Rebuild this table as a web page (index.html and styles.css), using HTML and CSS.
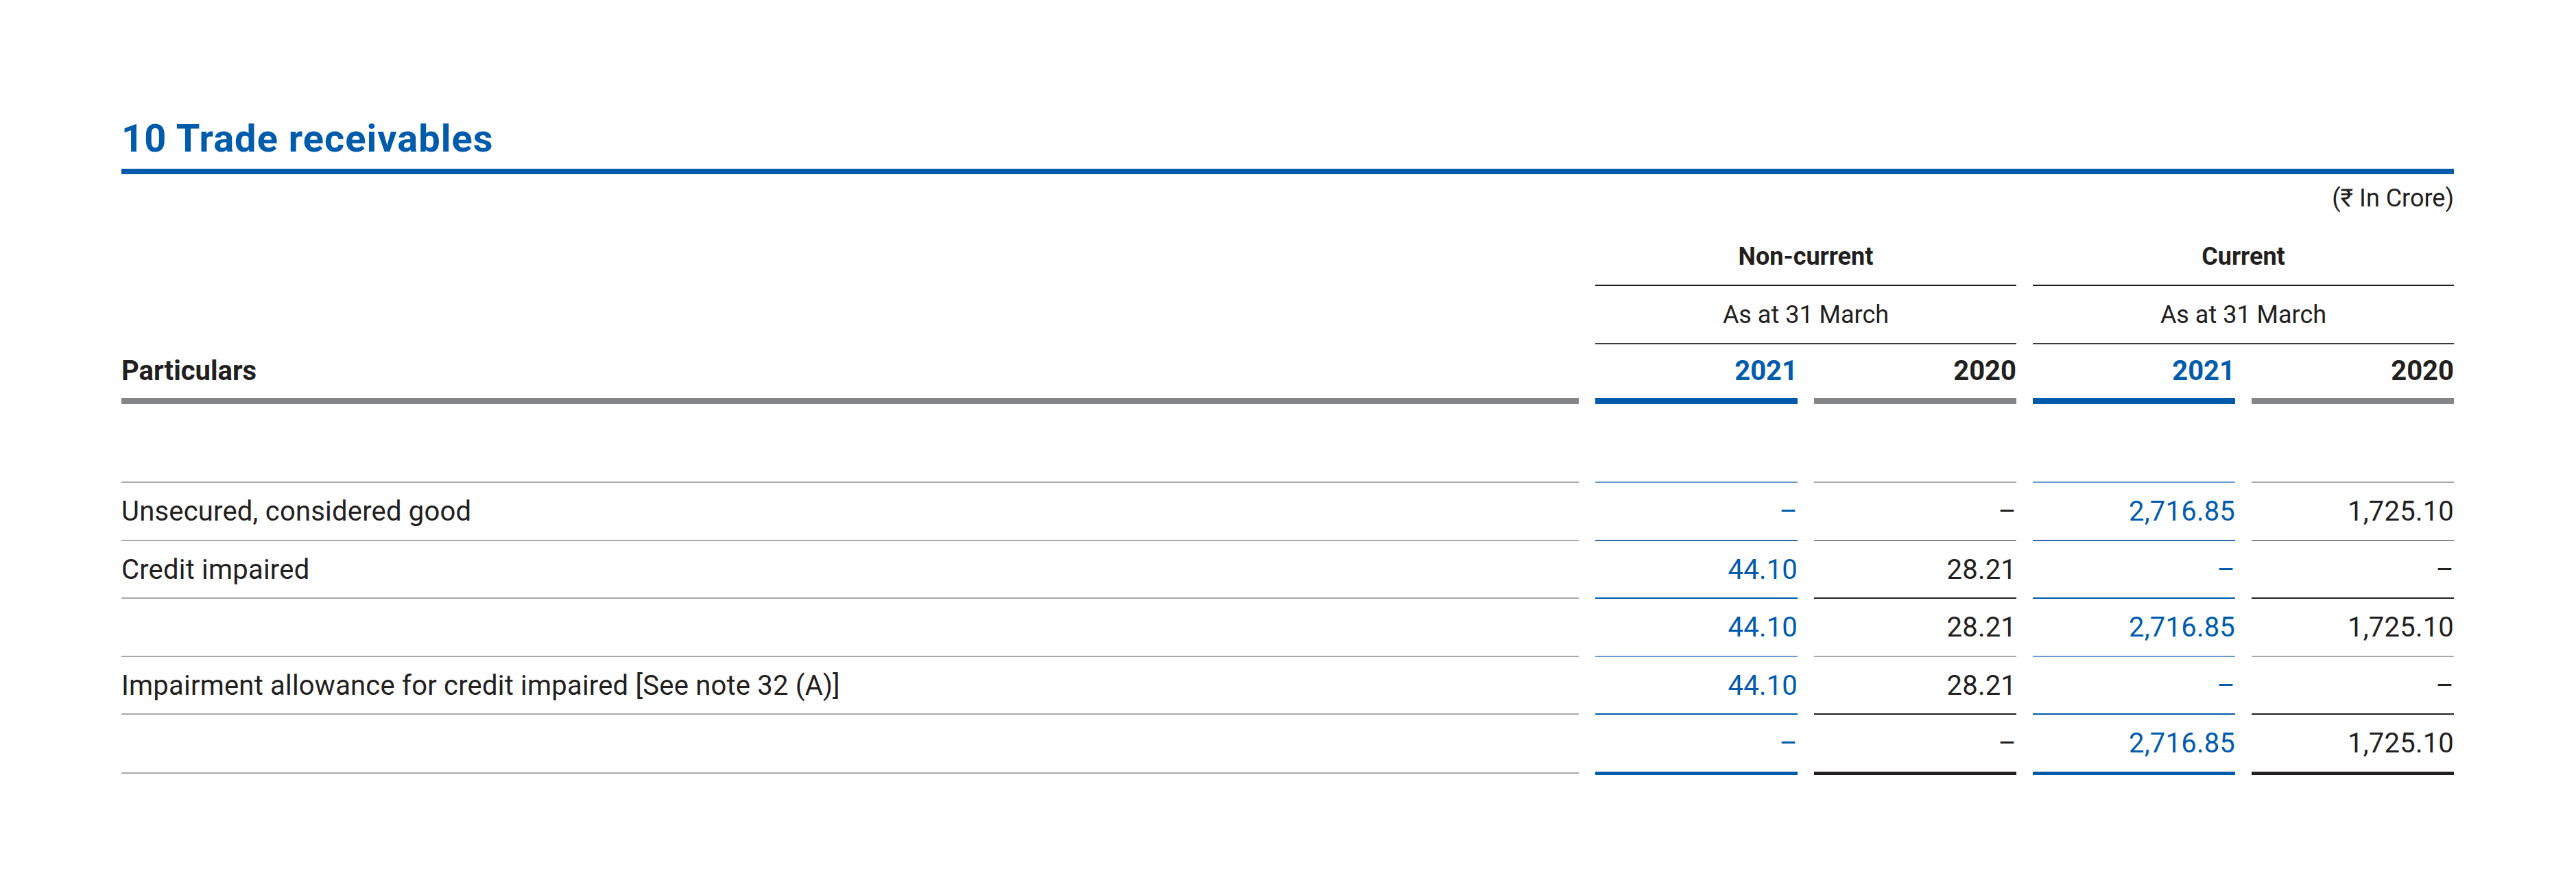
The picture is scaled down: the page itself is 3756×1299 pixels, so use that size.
FILE: index.html
```html
<!DOCTYPE html>
<html lang="en">

<head>
    <meta charset="UTF-8">
    <meta name="viewport" content="width=device-width, initial-scale=1.0">
    <title>10 Trade receivables</title>
    <link rel="stylesheet" href="styles.css">
</head>

<body>
    <section class="note">
        <h2 class="note-title">10 Trade receivables</h2>
        <p class="unit">(₹ In Crore)</p>

        <div class="grid">
            <!-- cabecalho -->
            <div class="blank"></div>
            <div class="group span2">Non-current</div>
            <div class="group span2">Current</div>

            <div class="blank"></div>
            <div class="asat span2">As at 31 March</div>
            <div class="asat span2">As at 31 March</div>

            <div class="head label">Particulars</div>
            <div class="head year cur">2021</div>
            <div class="head year prev">2020</div>
            <div class="head year cur">2021</div>
            <div class="head year prev">2020</div>

            <div class="spacer"></div>

            <!-- linhas -->
            <div class="row first thin">
                <div class="cell label">Unsecured, considered good</div>
                <div class="cell num cur">–</div>
                <div class="cell num prev">–</div>
                <div class="cell num cur">2,716.85</div>
                <div class="cell num prev">1,725.10</div>
            </div>
            <div class="row sum">
                <div class="cell label">Credit impaired</div>
                <div class="cell num cur">44.10</div>
                <div class="cell num prev">28.21</div>
                <div class="cell num cur">–</div>
                <div class="cell num prev">–</div>
            </div>
            <div class="row light">
                <div class="cell label"></div>
                <div class="cell num cur">44.10</div>
                <div class="cell num prev">28.21</div>
                <div class="cell num cur">2,716.85</div>
                <div class="cell num prev">1,725.10</div>
            </div>
            <div class="row sum">
                <div class="cell label">Impairment allowance for credit impaired [See note 32 (A)]</div>
                <div class="cell num cur">44.10</div>
                <div class="cell num prev">28.21</div>
                <div class="cell num cur">–</div>
                <div class="cell num prev">–</div>
            </div>
            <div class="row total">
                <div class="cell label"></div>
                <div class="cell num cur">–</div>
                <div class="cell num prev">–</div>
                <div class="cell num cur">2,716.85</div>
                <div class="cell num prev">1,725.10</div>
            </div>
        </div>
    </section>
</body>

</html>
```

FILE: styles.css
```css
body {
    margin: 0;
    padding: 169px 178px 0 177px;
    background-color: #fff;
    color: #231f20;
    font-family: Roboto, "Noto Sans", "DejaVu Sans", sans-serif;
}

.note-title {
    margin: 0;
    padding-bottom: 11px;
    font-size: 56px;
    line-height: 66px;
    font-weight: 700;
    letter-spacing: 1px;
    color: #005bab;
    border-bottom: 8px solid #005bab;
}

.unit {
    margin: 14px 0 0;
    font-size: 36px;
    line-height: 42px;
    text-align: right;
}

.grid {
    display: grid;
    grid-template-columns: 1fr repeat(4, 295px);
    column-gap: 24px;
}

.span2 {
    grid-column: span 2;
    text-align: center;
}

.group {
    padding: 43px 0 20px;
    font-size: 36px;
    line-height: 42px;
    font-weight: 700;
    border-bottom: 2px solid #231f20;
}

.asat {
    padding: 21px 0 20px;
    font-size: 36px;
    line-height: 42px;
    border-bottom: 2px solid #3c3a3b;
}

.head {
    padding: 16px 0;
    font-size: 40px;
    line-height: 46px;
    font-weight: 700;
    border-bottom: 9px solid #848589;
}

.year {
    text-align: right;
}

.head.cur {
    color: #005bab;
    border-bottom-color: #005bab;
}

.spacer {
    grid-column: 1 / -1;
    height: 113px;
}

.row {
    display: contents;
}

.cell {
    padding: 19px 0 17.5px;
    font-size: 40px;
    line-height: 46px;
    letter-spacing: 0.2px;
    border-bottom: 2px solid #a7a9ac;
}

.num {
    text-align: right;
}

.num.cur {
    color: #005bab;
}

/* bordas de cada linha */
.first .cell {
    border-top: 2px solid #a7a9ac;
}

.first .cur {
    border-top-color: #6b9bd2;
}

.thin .cur {
    border-bottom-color: #2a67b1;
}

.thin .prev {
    border-bottom-color: #8a8a8d;
}

.sum .cur {
    border-bottom: 2.5px solid #005bab;
}

.sum .prev {
    border-bottom: 2.5px solid #231f20;
}

.light .cur {
    border-bottom-color: #6b9bd2;
}

.total .cur {
    border-bottom: 5px solid #005bab;
}

.total .prev {
    border-bottom: 5px solid #231f20;
}

.total .label {
    margin-bottom: 2px;
}
```
